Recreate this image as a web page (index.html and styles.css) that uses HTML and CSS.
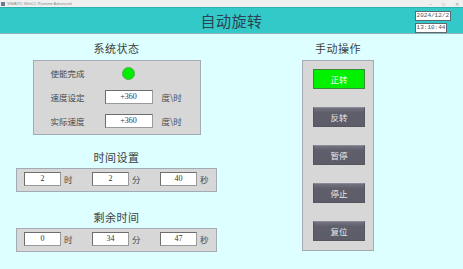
FILE: index.html
```html
<!DOCTYPE html>
<html>
<head>
    <title>自动旋转</title>
    <link rel="stylesheet" href="styles.css">
</head>
<body>
    <div class="titlebar">
        <span class="app-icon"></span>
        <span class="app-name">SIMATIC WinCC Runtime Advanced</span>
        <div class="win-controls">
            <span>&#8211;</span>
            <span>&#9633;</span>
            <span>&#10005;</span>
        </div>
    </div>

    <div class="header">
        <div></div>
        <h1 class="title">自动旋转</h1>
        <div class="clock">
            <div class="clock-box">2024/12/2</div>
            <div class="clock-box">13:10:44</div>
        </div>
    </div>

    <div class="main">
        <div class="left-col">
            <h2 class="section-title">系统状态</h2>
            <div class="panel status-panel">
                <div class="status-row">
                    <span class="label">使能完成</span>
                    <span class="lamp-cell"><span class="lamp"></span></span>
                    <span></span>
                </div>
                <div class="status-row">
                    <span class="label">速度设定</span>
                    <span class="field wide">+360</span>
                    <span class="unit">度\时</span>
                </div>
                <div class="status-row">
                    <span class="label">实际速度</span>
                    <span class="field wide">+360</span>
                    <span class="unit">度\时</span>
                </div>
            </div>

            <h2 class="section-title gap-top">时间设置</h2>
            <div class="panel time-panel">
                <div class="time-group"><span class="field">2</span><span class="unit">时</span></div>
                <div class="time-group"><span class="field">2</span><span class="unit">分</span></div>
                <div class="time-group"><span class="field">40</span><span class="unit">秒</span></div>
            </div>

            <h2 class="section-title gap-top">剩余时间</h2>
            <div class="panel time-panel">
                <div class="time-group"><span class="field">0</span><span class="unit">时</span></div>
                <div class="time-group"><span class="field">34</span><span class="unit">分</span></div>
                <div class="time-group"><span class="field">47</span><span class="unit">秒</span></div>
            </div>
        </div>

        <div class="right-col">
            <h2 class="section-title">手动操作</h2>
            <div class="panel button-panel">
                <button class="op-button active">正转</button>
                <button class="op-button">反转</button>
                <button class="op-button">暂停</button>
                <button class="op-button">停止</button>
                <button class="op-button">复位</button>
            </div>
        </div>
    </div>
</body>
</html>
```

FILE: styles.css
```css
body {
    margin: 0;
    width: 463px;
    height: 269px;
    overflow: hidden;
    background-color: #ddffff;
    font-family: "Liberation Serif", "Noto Sans CJK SC", serif;
    color: #4a4a4a;
}

.titlebar {
    height: 7px;
    background-color: #f0f0f0;
    display: flex;
    align-items: center;
    font-family: "Liberation Sans", sans-serif;
    font-size: 4px;
    color: #8a8a8a;
}

.app-icon {
    width: 4px;
    height: 4px;
    margin: 0 2px 0 1px;
    background-color: #6a7890;
}

.win-controls {
    margin-left: auto;
    display: flex;
    gap: 10px;
    margin-right: 4px;
    font-size: 5px;
    color: #a0a0a0;
}

.header {
    height: 25px;
    background-color: #33c9c9;
    border-top: 1px solid #2fb0b0;
    border-bottom: 1px solid #8fb4b4;
    display: grid;
    grid-template-columns: 1fr auto 1fr;
    align-items: center;
}

.title {
    margin: 0;
    font-family: "Noto Sans CJK SC", sans-serif;
    font-size: 15px;
    font-weight: normal;
    line-height: 20px;
    color: #2c4152;
    letter-spacing: 0.5px;
}

.clock {
    justify-self: end;
    margin-right: 12px;
    display: flex;
    flex-direction: column;
    align-items: flex-start;
    gap: 2px;
    padding-top: 2px;
}

.clock-box {
    height: 8px;
    padding: 0 1px;
    background-color: #ffffff;
    border: 1px solid #5f6870;
    font-family: "Liberation Mono", monospace;
    font-size: 6px;
    line-height: 8px;
    color: #4a5060;
}

.main {
    display: flex;
    padding-left: 16px;
}

.left-col {
    width: 201px;
    display: flex;
    flex-direction: column;
    align-items: center;
}

.right-col {
    width: 72px;
    margin-left: 85px;
    display: flex;
    flex-direction: column;
    align-items: center;
}

.section-title {
    margin: 7px 0 5px;
    height: 14px;
    font-family: "Noto Sans CJK SC", sans-serif;
    font-size: 11px;
    font-weight: normal;
    line-height: 14px;
    color: #3e3e3e;
    letter-spacing: 0.5px;
}

.section-title.gap-top {
    margin-top: 15px;
    margin-bottom: 4px;
}

.left-col .section-title.gap-top:last-of-type {
    margin-top: 18px;
}

.panel {
    background-color: #d7d7d7;
    border: 1px solid #a3acb4;
    box-sizing: border-box;
}

.status-panel {
    width: 168px;
    height: 75px;
    padding: 0 0 0 17px;
}

.status-row {
    height: 24px;
    display: grid;
    grid-template-columns: 54px 48px auto;
    align-items: center;
}

.status-row .unit {
    margin-left: 9px;
}

.label {
    font-family: "Noto Sans CJK SC", sans-serif;
    font-size: 8.5px;
    color: #4a4a4a;
}

.lamp-cell {
    display: flex;
    justify-content: center;
}

.lamp {
    width: 11px;
    height: 11px;
    border-radius: 50%;
    background-color: #00ee00;
    border: 1px solid #4cae4c;
}

.field {
    box-sizing: border-box;
    width: 37px;
    height: 14px;
    background-color: #ffffff;
    border: 1px solid #6e6e6e;
    border-right-color: #9a9a9a;
    border-bottom-color: #9a9a9a;
    font-size: 8px;
    line-height: 12px;
    text-align: center;
    color: #333333;
}

.field.wide {
    width: 48px;
}

.unit {
    font-family: "Noto Sans CJK SC", sans-serif;
    font-size: 8.5px;
    color: #4a4a4a;
}

.time-panel {
    width: 201px;
    height: 24px;
    padding: 3px 0 0 7px;
    display: flex;
}

.time-group {
    flex: none;
    width: 68px;
    display: flex;
    align-items: center;
    height: 14px;
    gap: 3px;
}

.button-panel {
    width: 72px;
    height: 191px;
    padding: 8px 0 0 10px;
    display: flex;
    flex-direction: column;
    gap: 18px;
}

.op-button {
    width: 52px;
    height: 20px;
    padding: 0;
    border: 1px solid #55565e;
    border-top-color: #8a8b96;
    background: linear-gradient(#72737f, #5e5f6b 25%, #5c5d69);
    font-family: "Noto Sans CJK SC", sans-serif;
    font-size: 8.5px;
    color: #e8e8ee;
    cursor: pointer;
}

.op-button.active {
    background: #00f000;
    border: 1px solid #3b8a3b;
    color: #f4fff4;
}
```
